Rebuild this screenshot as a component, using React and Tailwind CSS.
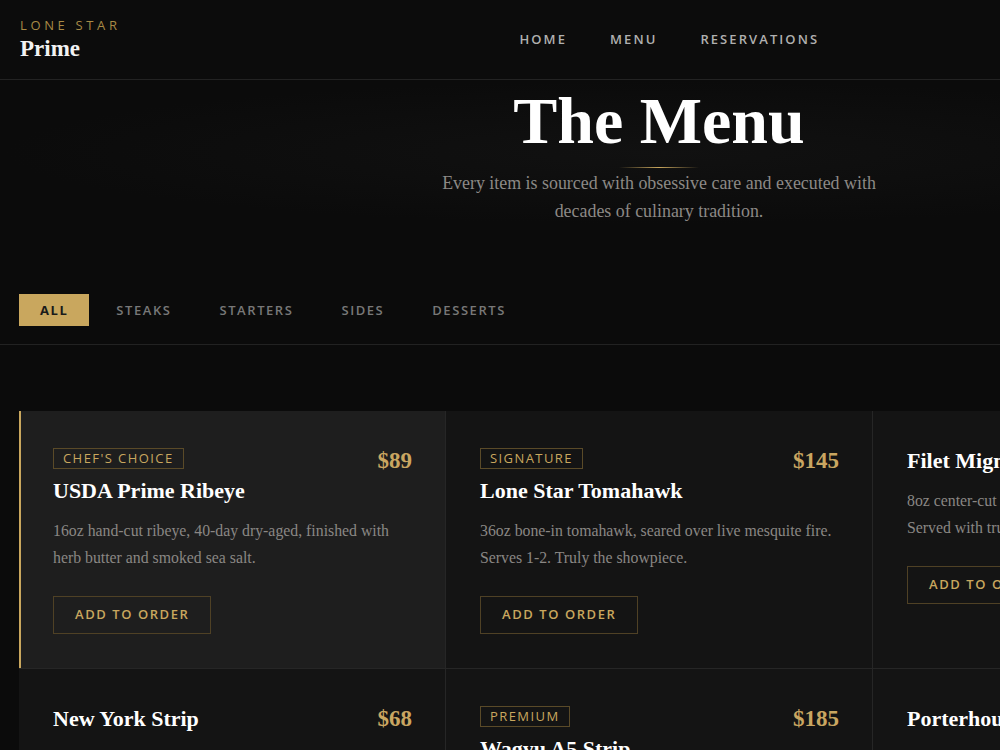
import { useState } from 'react'

const items = [
  { name: 'USDA Prime Ribeye', price: '$89', badge: "CHEF'S CHOICE", desc: '16oz hand-cut ribeye, 40-day dry-aged, finished with herb butter and smoked sea salt.' },
  { name: 'Lone Star Tomahawk', price: '$145', badge: 'SIGNATURE', desc: '36oz bone-in tomahawk, seared over live mesquite fire. Serves 1-2. Truly the showpiece.' },
  { name: 'Filet Mignon', price: '$72', badge: null, desc: '8oz center-cut tenderloin, butter-basted with thyme. Served with truffle demi-glace.' },
  { name: 'New York Strip', price: '$68', badge: null, desc: '14oz strip loin with a bold crust, peppercorn sauce and roasted shallots.' },
  { name: 'Wagyu A5 Strip', price: '$185', badge: 'PREMIUM', desc: 'Authentic Japanese A5 wagyu, sliced tableside and seared on hot stone.' },
  { name: 'Porterhouse', price: '$95', badge: null, desc: '32oz porterhouse for the table, dry-aged and charred over oak.' },
]

const tabs = ['ALL', 'STEAKS', 'STARTERS', 'SIDES', 'DESSERTS']

const sans = "font-['Open_Sans',_'DejaVu_Sans',_sans-serif]"
const serif = "font-['Liberation_Serif',_'DejaVu_Serif',_serif]"

function MenuCard({ item, active }) {
  return (
    <div
      className={`flex flex-col pr-[33px] pt-[37px] pb-[34px] ${active ? 'bg-[#1e1e1e] border-l-2 border-[#c9a75e] pl-[32px]' : 'bg-[#141414] pl-[34px]'}`}
    >
      <div className="flex items-start justify-between">
        <div className="flex flex-col">
          {item.badge && (
            <span className={`${sans} self-start border border-[#5a4a28] px-[9px] py-[2px] text-[13px] leading-[15px] tracking-[0.11em] text-[#c9a75e] mb-[9px]`}>
              {item.badge}
            </span>
          )}
          <h3 className={`${serif} text-[22px] font-bold leading-[26px] text-white`}>{item.name}</h3>
        </div>
        <span className={`${serif} text-[23px] font-bold leading-[26px] text-[#c9a661]`}>{item.price}</span>
      </div>
      <p className={`${serif} mt-[13px] text-[15.8px] leading-[27px] text-[#8a8784]`}>{item.desc}</p>
      <button className={`${sans} mt-[25px] self-start border border-[#4f4125] px-[21px] h-[38px] text-[13px] font-semibold tracking-[0.12em] text-[#c9a75e]`}>
        ADD TO ORDER
      </button>
    </div>
  )
}

export default function App() {
  const [active, setActive] = useState('ALL')

  return (
    <div className="h-screen w-full overflow-hidden bg-[#0b0b0b]">
      <div className="w-[1318px] bg-[#0b0b0b]">
        {/* Header */}
        <header className="flex h-[80px] items-center justify-between border-b border-[#232323] bg-[#0c0c0c] px-5">
          <div className="flex flex-col">
            <span className={`${sans} text-[13px] leading-4 tracking-[0.28em] text-[#a88a45]`}>LONE STAR</span>
            <span className={`${serif} mt-[2px] text-[23px] font-bold leading-7 text-[#f2f2f2]`}>Prime</span>
          </div>
          <nav className={`${sans} flex gap-[43px] text-[13px] font-semibold tracking-[0.16em] text-[#b0b0b0]`}>
            <a>HOME</a>
            <a>MENU</a>
            <a>RESERVATIONS</a>
          </nav>
          <div className="w-20" />
        </header>

        {/* Hero */}
        <section className="flex flex-col items-center bg-[radial-gradient(ellipse_at_center,_#111111_0%,_#0b0b0b_70%)] pt-[8px]">
          <h1 className={`${serif} text-[66px] font-bold leading-none text-white`}>The Menu</h1>
          <div className="mt-[13px] h-px w-20 bg-[linear-gradient(90deg,_transparent,_#c9a75e,_transparent)]" />
          <p className={`${serif} mt-px text-center text-[17.9px] leading-[28px] text-[#8c8986]`}>
            Every item is sourced with obsessive care and executed with
            <br />
            decades of culinary tradition.
          </p>
        </section>

        {/* Filter tabs */}
        <div className="mt-[69px] flex gap-1.5 border-b border-[#222222] px-[19px] pb-[18px]">
          {tabs.map((t) => (
            <button
              key={t}
              onClick={() => setActive(t)}
              className={`${sans} px-[21px] py-2 text-[13px] leading-4 tracking-[0.12em] ${active === t ? 'bg-[#c9a75e] font-bold text-[#1a1a1a]' : 'font-semibold text-[#787878]'}`}
            >
              {t}
            </button>
          ))}
        </div>

        {/* Grid */}
        <div className="mx-[19px] mt-[66px] grid grid-cols-3 gap-px bg-[#262626]">
          {items.map((item, i) => (
            <MenuCard key={item.name} item={item} active={i === 0} />
          ))}
        </div>
      </div>
    </div>
  )
}
